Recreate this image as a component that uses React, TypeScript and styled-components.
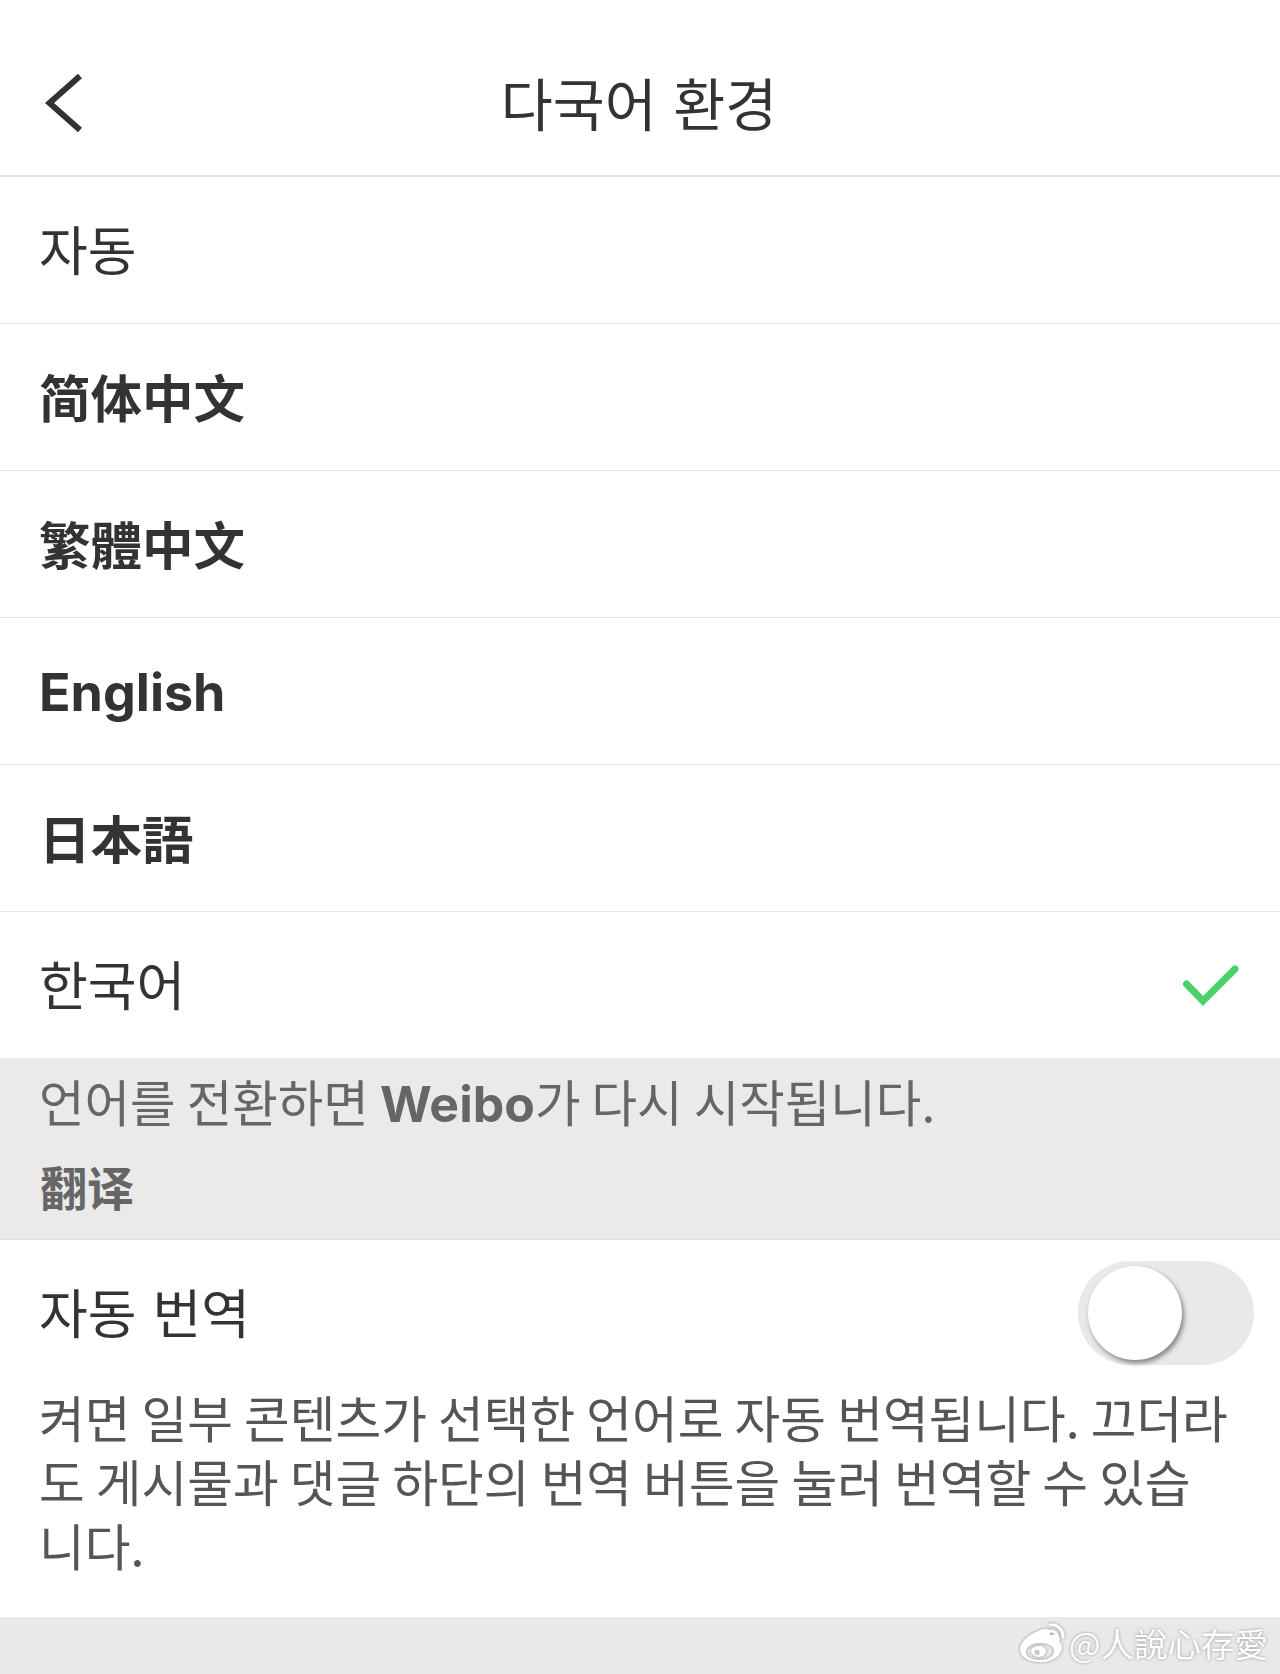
import React from "react";
import styled, { createGlobalStyle } from "styled-components";

const KR = `"Noto Sans CJK KR", "Noto Sans", sans-serif`;
const SC = `"Noto Sans CJK SC", sans-serif`;
const TC = `"Noto Sans CJK TC", sans-serif`;
const JP = `"Noto Sans CJK JP", sans-serif`;

const GlobalStyle = createGlobalStyle`
  html, body {
    margin: 0;
    padding: 0;
    background: #fff;
  }
`;

const Page = styled.div`
  width: 1280px;
  height: 1674px;
  display: flex;
  flex-direction: column;
  overflow: hidden;
  font-family: ${KR};
  color: #333;
`;

const Header = styled.header`
  height: 177px;
  flex: none;
  box-sizing: border-box;
  padding-top: 30px;
  display: grid;
  grid-template-columns: 1fr auto 1fr;
  align-items: center;
  border-bottom: 2px solid #e4e4e4;
`;

const BackIcon = styled.svg`
  width: 50px;
  height: 70px;
  margin: 0 0 0 40px;
  fill: none;
  stroke: #333;
  stroke-width: 6;
`;

const Title = styled.h1`
  margin: 0 0 3px -2px;
  font-size: 56.5px;
  font-weight: 400;
  line-height: 70px;
  word-spacing: 4px;
`;

const RowList = styled.div`
  display: flex;
  flex-direction: column;
  flex: none;
`;

const Row = styled.div`
  height: 147px;
  flex: none;
  box-sizing: border-box;
  padding: 0 40px 0 39px;
  display: flex;
  align-items: center;
  justify-content: space-between;
  border-bottom: 1px solid #e6e6e6;
  &:last-child {
    height: 146px;
    border-bottom: none;
  }
`;

const Label = styled.span`
  font-size: 53px;
  line-height: 64px;
  padding-bottom: 5px;
  word-spacing: 4px;
`;

const HanLabel = styled.span<{ $font: string }>`
  font-family: ${(p) => p.$font};
  font-weight: 700;
  font-size: 51.5px;
  line-height: 64px;
  padding-bottom: 2px;
`;

const EnglishLabel = styled.span`
  font-family: Inter, sans-serif;
  font-weight: 700;
  font-size: 52px;
  line-height: 64px;
  padding-top: 3px;
`;

const Notice = styled.div`
  height: 182px;
  flex: none;
  box-sizing: border-box;
  background: #eaeaea;
  border-bottom: 1px solid #dedede;
  padding: 13px 40px 0 39px;
  color: #666;
`;

const NoticeLine = styled.p`
  margin: 0;
  font-size: 49.5px;
  line-height: 60px;
  white-space: nowrap;
`;

const Brand = styled.b`
  font-family: Inter, sans-serif;
  font-weight: 700;
  font-size: 50px;
`;

const SectionName = styled.h2`
  margin: 22px 0 0 1px;
  font-family: ${SC};
  font-size: 47px;
  font-weight: 700;
  line-height: 60px;
`;

const AutoBlock = styled.section`
  flex: 1;
  padding: 0 26px 0 39px;
`;

const AutoRow = styled.div`
  height: 146px;
  display: flex;
  align-items: center;
  justify-content: space-between;
`;

const Toggle = styled.div`
  width: 176px;
  height: 104px;
  border-radius: 52px;
  background: #e9e9e9;
  display: flex;
  align-items: center;
  padding-left: 10px;
  box-sizing: border-box;
`;

const Knob = styled.div`
  width: 94px;
  height: 94px;
  border-radius: 50%;
  background: #fff;
  box-shadow: 2px 3px 5px rgba(0, 0, 0, 0.45);
`;

const Description = styled.p`
  margin: -2px 0 0;
  font-size: 49.7px;
  line-height: 64px;
  color: #555;
  width: 1194px;
`;

const Footer = styled.footer`
  height: 57px;
  flex: none;
  background: #e9e9e9;
  position: relative;
`;

const Watermark = styled.div`
  position: absolute;
  right: 12px;
  top: 1px;
  display: flex;
  align-items: center;
  gap: 3px;
  color: #fff;
  font-family: ${TC};
  font-size: 33.5px;
  line-height: 50px;
  text-shadow: 0 0 3px rgba(0, 0, 0, 0.4);
`;

const WeiboLogo = styled.svg`
  width: 48px;
  height: 44px;
  filter: drop-shadow(0 0 1.5px rgba(0, 0, 0, 0.4));
`;

const hanLanguages = [
  { text: "简体中文", font: SC },
  { text: "繁體中文", font: TC },
];

export default function App() {
  return (
    <Page>
      <GlobalStyle />
      <Header>
        <BackIcon viewBox="0 0 50 70">
          <path d="M40 8 L9.500 35 L40 62" />
        </BackIcon>
        <Title>다국어 환경</Title>
        <span />
      </Header>
      <RowList>
        <Row>
          <Label>자동</Label>
        </Row>
        {hanLanguages.map((l) => (
          <Row key={l.text}>
            <HanLabel $font={l.font}>{l.text}</HanLabel>
          </Row>
        ))}
        <Row>
          <EnglishLabel>English</EnglishLabel>
        </Row>
        <Row>
          <HanLabel $font={JP}>日本語</HanLabel>
        </Row>
        <Row>
          <Label>한국어</Label>
          <svg width="60" height="46" viewBox="0 0 60 46" fill="none">
            <path
              d="M6.500 22 L23 39 L55 7"
              stroke="#4cd06a"
              strokeWidth="7"
              strokeLinecap="round"
              strokeLinejoin="miter"
            />
          </svg>
        </Row>
      </RowList>
      <Notice>
        <NoticeLine>
          언어를 전환하면 <Brand>Weibo</Brand>가 다시 시작됩니다.
        </NoticeLine>
        <SectionName>翻译</SectionName>
      </Notice>
      <AutoBlock>
        <AutoRow>
          <Label>자동 번역</Label>
          <Toggle>
            <Knob />
          </Toggle>
        </AutoRow>
        <Description>
          켜면 일부 콘텐츠가 선택한 언어로 자동 번역됩니다. 끄더라도 게시물과 댓글 하단의 번역 버튼을 눌러 번역할 수
          있습니다.
        </Description>
      </AutoBlock>
      <Footer>
        <Watermark>
          <WeiboLogo viewBox="0 0 48 44">
            <path
              fill="#fff"
              fillRule="evenodd"
              d="M20 10c6-3 11-3 12 1 .4 1.600-.2 3 .8 3.200 5-1.500 9-.4 9 3.600 0 2-.6 3-.2 3.500 2 .8 2.400 3 2.400 5 0 8-9 15-21 15C11 41.300 2 36 2 28c0-6 7-14 18-18Zm2 12c-8 0-14 4-14 9s6 8 14 8 14-4 14-9-6-8-14-8Zm-1 3c4 0 7 2 7 5s-3 6-7 6-8-3-8-6 4-5 8-5Zm-2 4a2.500 2.500 0 1 0 0 5 2.500 2.500 0 0 0 0-5Z"
            />
            <path
              fill="none"
              stroke="#fff"
              strokeWidth="3"
              strokeLinecap="round"
              d="M32 4c7-1 13 4 13 12M32 10c4-.5 7 2 7 6"
            />
          </WeiboLogo>
          @人說心存愛
        </Watermark>
      </Footer>
    </Page>
  );
}
